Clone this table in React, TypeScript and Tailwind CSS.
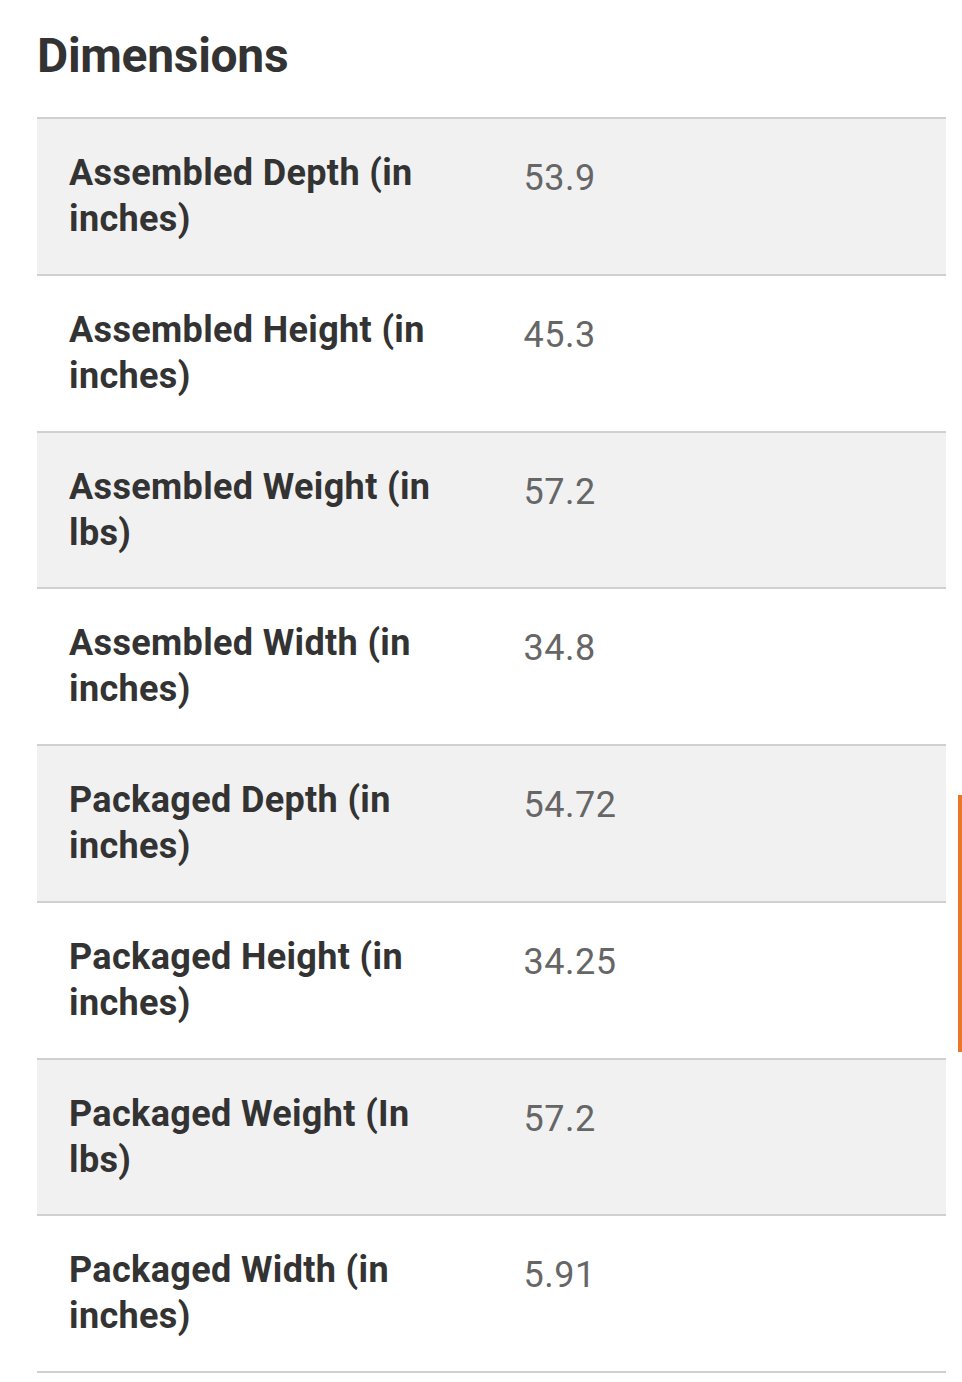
import React from "react";

const rows: [string, string][] = [
  ["Assembled Depth (in inches)", "53.9"],
  ["Assembled Height (in inches)", "45.3"],
  ["Assembled Weight (in lbs)", "57.2"],
  ["Assembled Width (in inches)", "34.8"],
  ["Packaged Depth (in inches)", "54.72"],
  ["Packaged Height (in inches)", "34.25"],
  ["Packaged Weight (In lbs)", "57.2"],
  ["Packaged Width (in inches)", "5.91"],
];

export default function App() {
  return (
    <div
      className="relative w-[962px] h-[1382px] bg-white overflow-hidden"
      style={{ fontFamily: "Roboto, 'Liberation Sans', sans-serif" }}
    >
      <div className="pl-[37px] pr-[16px]">
        <h2 className="pt-[28px] text-[48px] leading-[56px] font-bold text-[#333] tracking-[-0.3px]">
          Dimensions
        </h2>
        <div className="mt-[33px] border-t-2 border-[#d0d0d0]">
          {rows.map(([label, value], i) => (
            <div
              key={label}
              className={`grid grid-cols-2 border-b-2 border-[#d0d0d0] ${
                i % 2 === 0 ? "bg-[#f1f1f1]" : "bg-white"
              }`}
            >
              <div className="pl-[32px] pr-[32px] pt-[31px] pb-[31.75px] text-[36px] leading-[46px] font-bold text-[#333] tracking-[0.35px]">
                {label}
              </div>
              <div className="pl-[32px] pr-[32px] pt-[36px] text-[36px] leading-[46px] text-[#666] tracking-[0.5px]">
                {value}
              </div>
            </div>
          ))}
        </div>
      </div>
      <div className="absolute left-[958px] top-[795px] w-[4px] h-[257px] bg-[#e8772a]" />
    </div>
  );
}
